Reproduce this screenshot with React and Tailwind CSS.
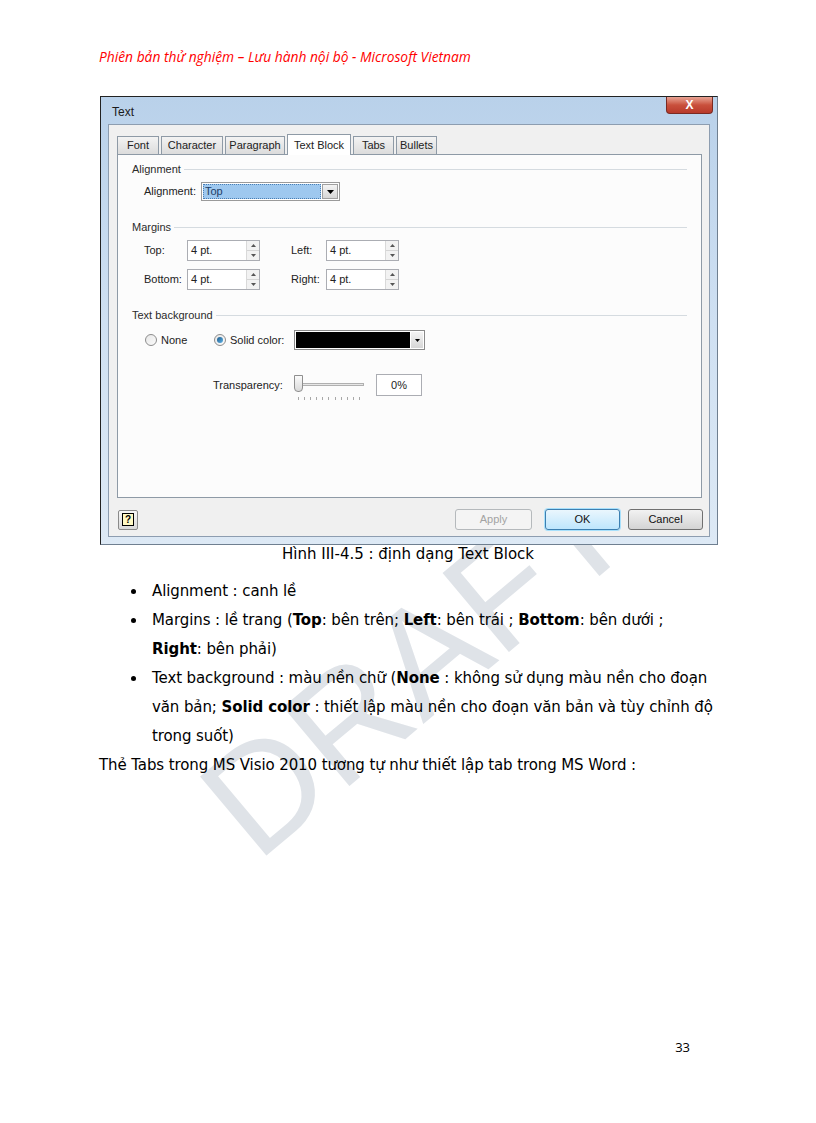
import React from "react";

const dlgFont = { fontFamily: '"Liberation Sans", Arial, sans-serif' };

const GroupHeader = ({ label }) => (
  <div className="flex items-center h-[14px]">
    <span className="text-[11px] text-[#2b2b2b] leading-[14px] pr-[3px]">{label}</span>
    <div className="flex-1 border-t border-[#d5dbe0]" />
  </div>
);

const SpinBox = ({ value }) => (
  <div className="w-[73px] h-[21px] border border-[#abadb3] bg-white flex">
    <span className="flex-1 pl-[3px] text-[11px] leading-[19px] text-[#222]">{value}</span>
    <div className="w-[13px] flex flex-col border-l border-[#d9d9d9] bg-[#f2f2f2]">
      <div className="flex-1 flex items-center justify-center border-b border-[#d5d5d5]">
        <svg width="5" height="3" viewBox="0 0 5 3"><path d="M0 3 L2.5 0 L5 3 Z" fill="#555" /></svg>
      </div>
      <div className="flex-1 flex items-center justify-center">
        <svg width="5" height="3" viewBox="0 0 5 3"><path d="M0 0 L2.5 3 L5 0 Z" fill="#555" /></svg>
      </div>
    </div>
  </div>
);

const Radio = ({ checked }) => (
  <div className="w-[12px] h-[12px] rounded-full border border-[#8d8d8d] bg-gradient-to-br from-[#e8e8e8] to-[#fafafa] flex items-center justify-center">
    {checked && <div className="w-[6px] h-[6px] rounded-full bg-gradient-to-br from-[#1c5a8a] to-[#5fb3e8]" />}
  </div>
);

const Tab = ({ label, w, active }) =>
  active ? (
    <div className={`${w} h-[21px] -mb-px border border-b-0 border-[#8e9aa6] bg-white flex items-center justify-center text-[11px] text-[#222] relative z-10`}>
      {label}
    </div>
  ) : (
    <div className={`${w} h-[18px] border border-b-0 border-[#8e9aa6] bg-gradient-to-b from-[#f3f3f3] to-[#dcdcdc] flex items-center justify-center text-[11px] text-[#222]`}>
      {label}
    </div>
  );

const Dialog = () => (
  <div
    className="ml-[100px] mt-[30px] w-[618px] h-[449px] border border-[#222] border-r-[#6f7f90] border-b-[#6f7f90] bg-gradient-to-b from-[#b9d1ea] via-[#cfe0f2] to-[#dde9f5] flex flex-col"
    style={dlgFont}
  >
    {/* title bar */}
    <div className="h-[27px] flex items-start">
      <span className="pl-[11px] pt-[8px] text-[12px] text-[#1a1a1a] leading-[14px]">Text</span>
      <div className="ml-auto mr-[4px] w-[47px] h-[17px] rounded-b-[4px] border border-[#7a2a22] border-t-0 bg-gradient-to-b from-[#e8a394] via-[#c9503c] to-[#b8392a] flex items-center justify-center">
        <span className="text-white text-[12px] font-bold leading-none">X</span>
      </div>
    </div>
    {/* client area */}
    <div className="mx-[7px] mb-[7px] flex-1 border border-[#8d9db0] bg-[#f0f0f0] flex flex-col">
      <div className="pt-[9px] pl-[8px] flex items-end gap-[2px]">
        <Tab label="Font" w="w-[42px]" />
        <Tab label="Character" w="w-[62px]" />
        <Tab label="Paragraph" w="w-[60px]" />
        <Tab label="Text Block" w="w-[64px]" active />
        <Tab label="Tabs" w="w-[41px]" />
        <Tab label="Bullets" w="w-[41px]" />
      </div>
      <div className="ml-[8px] mr-[7px] h-[344px] border border-[#8e9aa6] bg-[#fcfcfc] px-[14px] pt-[7px] flex flex-col">
        <GroupHeader label="Alignment" />
        <div className="mt-[6px] pl-[12px] h-[19px] flex items-center">
          <span className="w-[57px] text-[11px] text-[#222]">Alignment:</span>
          <div className="w-[139px] h-[19px] border border-[#9a9a9a] bg-white flex p-[1px]">
            <div className="flex-1 bg-[#9ec8ef] border border-dotted border-[#4a7fb5] text-[11px] leading-[13px] text-[#1d3d66] pl-[1px]">Top</div>
            <div className="w-[16px] ml-[1px] bg-gradient-to-b from-[#f4f4f4] to-[#d6d6d6] border border-[#a0a0a0] flex items-center justify-center">
              <svg width="7" height="4" viewBox="0 0 7 4"><path d="M0 0 L3.5 4 L7 0 Z" fill="#000" /></svg>
            </div>
          </div>
        </div>
        <div className="mt-[19px]">
          <GroupHeader label="Margins" />
        </div>
        <div className="mt-[6px] pl-[12px] flex items-center h-[21px]">
          <span className="w-[43px] text-[11px] text-[#222]">Top:</span>
          <SpinBox value="4 pt." />
          <span className="ml-[31px] w-[35px] text-[11px] text-[#222]">Left:</span>
          <SpinBox value="4 pt." />
        </div>
        <div className="mt-[8px] pl-[12px] flex items-center h-[21px]">
          <span className="w-[43px] text-[11px] text-[#222]">Bottom:</span>
          <SpinBox value="4 pt." />
          <span className="ml-[31px] w-[35px] text-[11px] text-[#222]">Right:</span>
          <SpinBox value="4 pt." />
        </div>
        <div className="mt-[18px]">
          <GroupHeader label="Text background" />
        </div>
        <div className="mt-[8px] pl-[13px] flex items-center h-[20px]">
          <Radio />
          <span className="ml-[4px] w-[53px] text-[11px] text-[#222]">None</span>
          <Radio checked />
          <span className="ml-[4px] w-[64px] text-[11px] text-[#222]">Solid color:</span>
          <div className="w-[131px] h-[20px] border border-[#8a8a8a] bg-white flex p-[1px]">
            <div className="flex-1 bg-black" />
            <div className="w-[12px] ml-[1px] bg-gradient-to-b from-[#f4f4f4] to-[#d6d6d6] flex items-center justify-center">
              <svg width="5" height="3" viewBox="0 0 5 3"><path d="M0 0 L2.5 3 L5 0 Z" fill="#000" /></svg>
            </div>
          </div>
        </div>
        <div className="mt-[24px] pl-[81px] flex items-start h-[30px]">
          <span className="w-[81px] text-[11px] text-[#222] leading-[22px]">Transparency:</span>
          <div className="w-[70px] h-[28px] flex flex-col">
            <div className="relative h-[20px] flex items-center">
              <div className="w-full h-[3px] border border-[#b0b0b0] bg-[#e6e6e6]" />
              <div className="absolute left-0 top-[1px] w-[9px] h-[17px] rounded-b-[4px] border border-[#8f8f8f] bg-gradient-to-b from-[#fbfbfb] to-[#dadada]" />
            </div>
            <div className="mt-[3px] flex justify-between px-[4px]">
              {Array.from({ length: 11 }).map((_, i) => (
                <div key={i} className="w-px h-[3px] bg-[#a8a8a8]" />
              ))}
            </div>
          </div>
          <div className="ml-[12px] w-[46px] h-[22px] border border-[#abadb3] bg-white text-[11px] text-[#222] flex items-center justify-center">
            0%
          </div>
        </div>
      </div>
      <div className="mt-[11px] pl-[9px] pr-[6px] flex items-center h-[21px]">
        <div className="w-[20px] h-[20px] border border-[#8a8a8a] rounded-[2px] bg-gradient-to-b from-[#f7f7f7] to-[#d9d9d9] flex items-center justify-center">
          <div className="w-[12px] h-[13px] border border-black bg-[#fff9c4] text-[10px] font-bold leading-[11px] text-center text-black">?</div>
        </div>
        <div className="ml-auto w-[77px] h-[21px] border border-[#b5b9bc] rounded-[3px] bg-[#f4f4f4] text-[11px] text-[#a3a3a3] flex items-center justify-center">
          Apply
        </div>
        <div className="ml-[13px] w-[75px] h-[21px] border border-[#3c7fb1] rounded-[3px] bg-gradient-to-b from-[#eaf6fd] to-[#bee6fd] shadow-[0_0_0_1px_#a8e0fb] text-[11px] text-[#111] flex items-center justify-center">
          OK
        </div>
        <div className="ml-[8px] w-[75px] h-[21px] border border-[#707070] rounded-[3px] bg-gradient-to-b from-[#f2f2f2] to-[#d4d4d4] text-[11px] text-[#111] flex items-center justify-center">
          Cancel
        </div>
      </div>
    </div>
  </div>
);

const Bullet = ({ children }) => (
  <li className="flex">
    <span className="w-[21px] h-[29px] flex items-center">
      <span className="w-[5px] h-[5px] rounded-full bg-black" />
    </span>
    <div className="w-[563px]">{children}</div>
  </li>
);

export default function App() {
  const body = { fontFamily: '"DejaVu Sans", Tahoma, Verdana, sans-serif' };
  return (
    <div className="relative w-[816px] h-[1123px] bg-white flex flex-col overflow-hidden">
      {/* watermark */}
      <div
        className="absolute left-[155px] top-[588px] w-[520px] text-center text-[150px] leading-none text-[#dfe3e8] -rotate-[40deg] select-none pointer-events-none"
        style={{ fontFamily: '"Liberation Sans", Arial, sans-serif' }}
        aria-hidden="true"
      >
        DRAFT
      </div>

      <p
        className="relative pt-[48px] pl-[99px] text-[13.8px] italic leading-[18px] text-[#ff0000]"
        style={{ fontFamily: '"Open Sans", "Liberation Sans", sans-serif' }}
      >
        Phiên bản thử nghiệm – Lưu hành nội bộ - Microsoft Vietnam
      </p>

      <div className="relative">
        <Dialog />
      </div>

      <div className="relative" style={body}>
        <p className="text-center text-[15px] leading-[18px] text-black">
          Hình III-4.5 : định dạng Text Block
        </p>
        <ul className="mt-[14px] pl-[131px] text-[15px] leading-[29px] tracking-[-0.1px] text-black">
          <Bullet>Alignment : canh lề</Bullet>
          <Bullet>
            Margins : lề trang (<b>Top</b>: bên trên; <b>Left</b>: bên trái ; <b>Bottom</b>: bên dưới ;{" "}
            <b>Right</b>: bên phải)
          </Bullet>
          <Bullet>
            Text background : màu nền chữ (<b>None</b> : không sử dụng màu nền cho đoạn văn bản;{" "}
            <b>Solid color</b> : thiết lập màu nền cho đoạn văn bản và tùy chỉnh độ trong suốt)
          </Bullet>
        </ul>
        <p className="pl-[99px] text-[15px] leading-[29px] tracking-[-0.1px] text-black">
          Thẻ Tabs trong MS Visio 2010 tương tự như thiết lập tab trong MS Word :
        </p>
      </div>

      <p
        className="relative mt-auto pb-[67px] pr-[126px] text-right text-[13px] leading-[18px] text-black"
        style={{ fontFamily: '"Open Sans", "Liberation Sans", sans-serif' }}
      >
        33
      </p>
    </div>
  );
}
